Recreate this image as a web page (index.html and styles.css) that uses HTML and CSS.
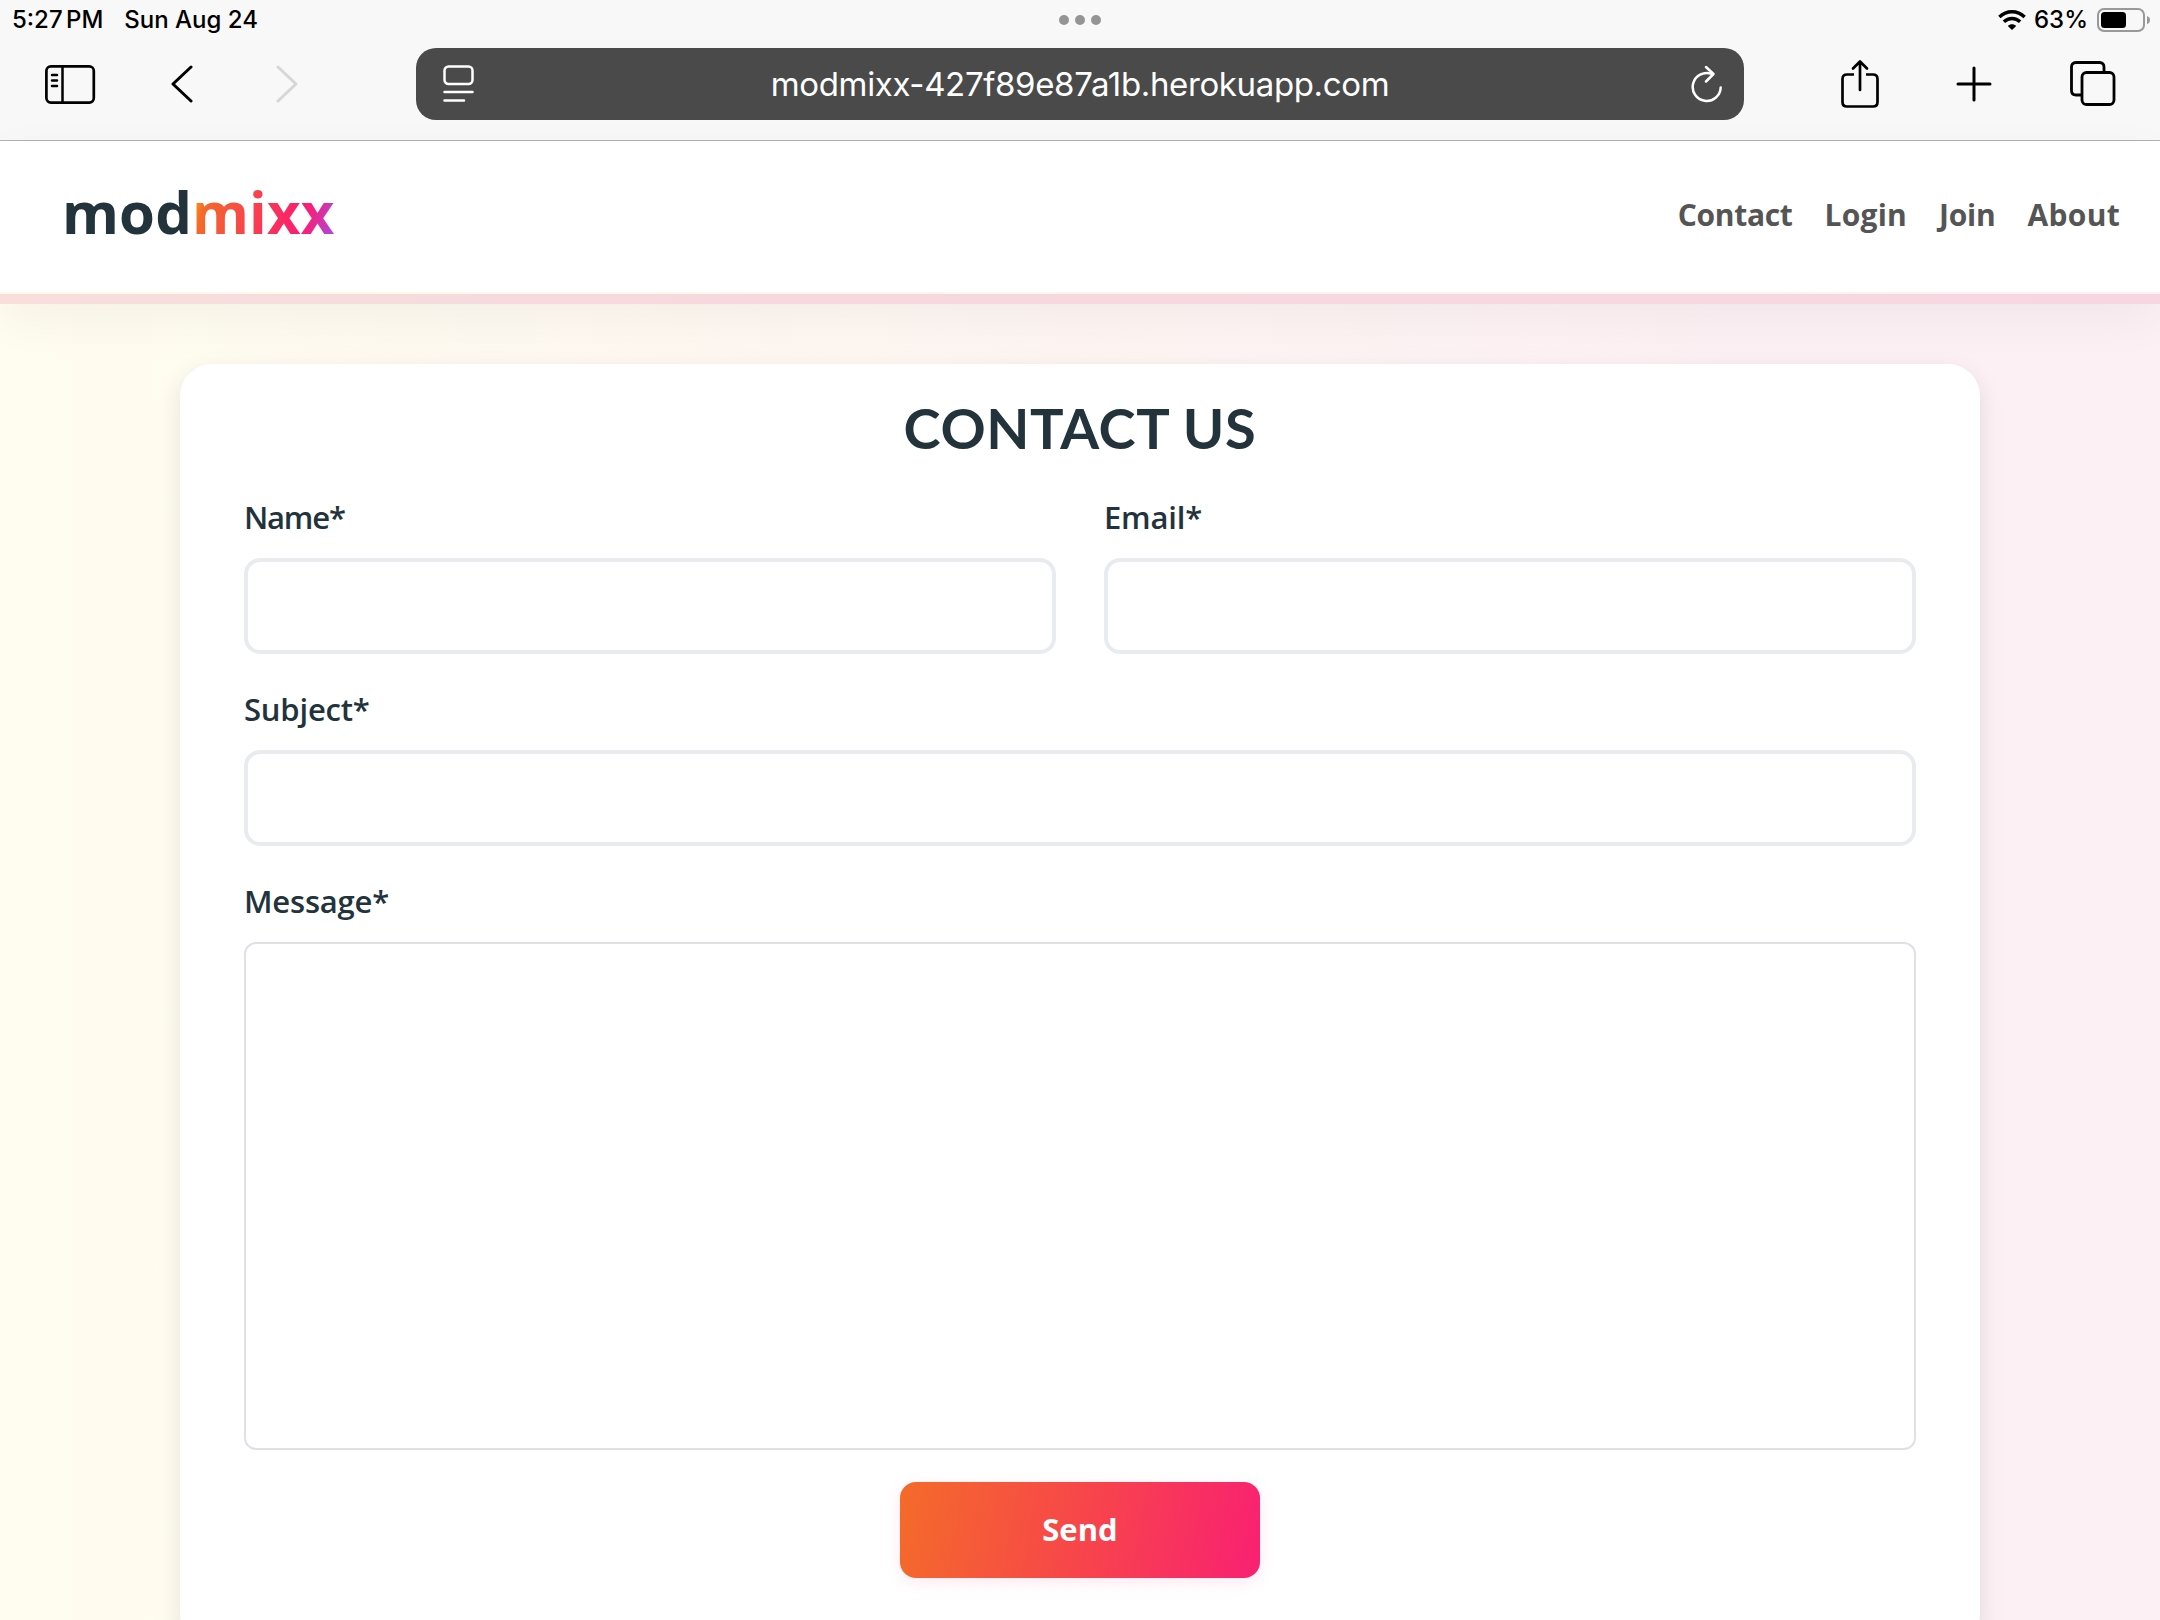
FILE: index.html
```html
<!DOCTYPE html>
<html lang="en">
<head>
<meta charset="utf-8">
<title>modmixx</title>
<link rel="stylesheet" href="styles.css">
</head>
<body>
<div class="browser">
  <div class="status">
    <div class="status-left"><span class="time">5:27 PM</span><span class="date">Sun Aug 24</span></div>
    <div class="dots"><i></i><i></i><i></i></div>
    <div class="status-right">
      <svg class="wifi" width="28" height="20" viewBox="0 0 28 20" fill="none" stroke="#000" stroke-width="3.4"><path d="M1.4 7C8.5 0 19.500 0 26.600 7M5.900 11.800C10.400 7.400 17.600 7.400 22.100 11.800"/><path d="M14 20L9.800 16C12 13.800 16 13.800 18.200 16Z" fill="#000" stroke="none"/></svg>
      <span class="percent">63%</span>
      <svg class="battery" width="54" height="24" viewBox="0 0 54 24"><rect x="1" y="1" width="46" height="22" rx="6" fill="none" stroke="#999" stroke-width="2"/><rect x="4" y="4" width="25" height="16" rx="3.500"/><path d="M50 8Q53 9 53 12T50 16Z" fill="#999"/></svg>
    </div>
  </div>
  <div class="toolbar">
    <div class="tools tools-left">
      <svg class="sidebar-icon" width="52" height="40" viewBox="0 0 52 40" fill="none" stroke="#000" stroke-width="2.700" stroke-linecap="round"><rect x="2.400" y="1.400" width="47.400" height="36.200" rx="4.500"/><path d="M18.500 1.500V37.500M8 10H13M8 15.500H13M8 21H13" stroke-width="2.500"/></svg>
      <svg width="22" height="38" viewBox="0 0 22 38" fill="none" stroke="#000" stroke-width="3" stroke-linecap="round" stroke-linejoin="round"><path d="M20 2L2 19L20 36"/></svg>
      <svg width="22" height="38" viewBox="0 0 22 38" fill="none" stroke="#d6d6d6" stroke-width="3" stroke-linecap="round" stroke-linejoin="round"><path d="M2 2L20 19L2 36"/></svg>
    </div>
    <div class="address">
      <svg width="32" height="38" viewBox="0 0 32 38" fill="none" stroke="#fff" stroke-width="2.500" stroke-linecap="round"><rect x="1.500" y="1.500" width="28" height="17.500" rx="4"/><path d="M1.500 27H29.500M1.500 35.500H21"/></svg>
      <span class="url">modmixx-427f89e87a1b.herokuapp.com</span>
      <svg width="32" height="38" viewBox="0 0 32 38" fill="none" stroke="#fff" stroke-width="2.500" stroke-linecap="round" stroke-linejoin="round"><path d="M29.700 22.500A14 14 0 1 1 20.500 8.800M15 2L22.500 9L15 16.500"/></svg>
    </div>
    <div class="tools tools-right">
      <svg width="40" height="50" viewBox="0 0 40 50" fill="none" stroke="#000" stroke-width="2.700" stroke-linecap="round" stroke-linejoin="round"><path d="M14 15.500H7Q2.500 15.500 2.500 20V43Q2.500 47.500 7 47.500H33Q37.500 47.500 37.500 43V20Q37.500 15.500 33 15.500H26" stroke-linecap="butt"/><path d="M20 31V3M13 9.500L20 2.500L27 9.500"/></svg>
      <svg class="plus-icon" width="36" height="36" viewBox="0 0 36 36" fill="none" stroke="#000" stroke-width="3" stroke-linecap="round"><path d="M18 2V34M2 18H34"/></svg>
      <svg class="tabs-icon" width="46" height="46" viewBox="0 0 46 46" fill="none" stroke="#000" stroke-width="2.800"><path d="M34 11V6Q34 1.500 29.500 1.500H6Q1.500 1.500 1.500 6V29.500Q1.500 34 6 34H12"/><rect x="12" y="11.500" width="32" height="32" rx="4.500"/></svg>
    </div>
  </div>
</div>
<header class="site-header">
  <a class="logo">mod<span>mixx</span></a>
  <nav><a class="n-contact">Contact</a><a class="n-login">Login</a><a class="n-join">Join</a><a class="n-about">About</a></nav>
</header>
<main>
  <form class="card">
    <h1>CONTACT US</h1>
    <div class="row">
      <div class="field"><label class="l-name">Name*</label><input type="text"></div>
      <div class="field"><label>Email*</label><input type="text"></div>
    </div>
    <div class="field"><label>Subject*</label><input type="text"></div>
    <div class="field"><label>Message*</label><textarea></textarea></div>
    <button type="button">Send</button>
  </form>
</main>
</body>
</html>
```
FILE: styles.css
```css
* { box-sizing: border-box; }
html, body { margin: 0; height: 1620px; overflow: hidden; }
body {
  display: flex;
  flex-direction: column;
  background: linear-gradient(90deg, #fffdef 0%, #fdf0f4 80%, #fdf0f4 100%);
  font-family: "Open Sans", sans-serif;
  color: #22333b;
}
svg { display: block; flex: none; }
.browser {
  flex: none;
  height: 141px;
  background: #f8f8f8;
  border-bottom: 1px solid #b2b2b2;
  font-family: Inter, sans-serif;
  color: #000;
}
.status {
  display: grid;
  grid-template-columns: minmax(0, 1fr) auto minmax(0, 1fr);
  align-items: center;
  height: 40px;
  padding: 0 9px;
  font-size: 24px;
  font-weight: 500;
  white-space: pre;
}
.status-left { display: flex; gap: 21px; padding: 0 0 1px 3px; }
.time { word-spacing: -3px; }
.dots { display: flex; gap: 6px; }
.dots i { width: 10px; height: 10px; border-radius: 50%; background: #949494; }
.status-right { display: flex; justify-content: flex-end; align-items: center; }
.percent { margin: 0 9px 0 8px; padding-bottom: 1px; }
.toolbar {
  display: grid;
  grid-template-columns: 416px 1328px 416px;
  align-items: center;
  height: 88px;
}
.tools { display: flex; align-items: center; }
.tools-left { padding-left: 44px; gap: 75px; }
.tools-left svg:last-child { margin-left: 8px; }
.sidebar-icon { margin-top: 2px; }
.tools-right { padding-left: 96px; gap: 79px; }
.plus-icon { margin: 0 -1px 0 -3px; }
.address {
  display: flex;
  align-items: center;
  justify-content: space-between;
  height: 72px;
  padding: 0 21px 0 27px;
  border-radius: 20px;
  background: #4a4a4a;
  color: #fff;
}
.url { margin-right: 6px; font-size: 33px; letter-spacing: -0.36px; }
.site-header {
  display: flex;
  flex: none;
  align-items: center;
  justify-content: space-between;
  height: 163px;
  padding: 0 40px 6px 62px;
  background: linear-gradient(90deg, #fffbea, #fff0f3) left bottom / 100% 2px no-repeat padding-box, #fff;
  border-style: solid;
  border-color: #f7d7e0;
  border-width: 0 0 10px;
  border-image: linear-gradient(90deg, #fadedc, #f6d8de 35%, #f7d6e1) 1;
  box-shadow: 0 16px 48px rgba(0, 0, 0, 0.045);
}
.logo { margin-top: -6px; font-size: 58px; font-weight: 700; line-height: 1; letter-spacing: 0.15px; }
.logo span {
  color: transparent;
  background: linear-gradient(105deg, #ffa500 4%, #f4692b 13%, #fa2566 67%, #f7207a 79%, #a34de8 99%);
  background-clip: text;
}
nav { display: flex; gap: 32px; font-size: 30px; font-weight: 700; color: #555; }
.n-contact { letter-spacing: -0.3px; }
.n-login { letter-spacing: 0.2px; }
.n-join { letter-spacing: -0.2px; }
.n-about { letter-spacing: 0.3px; }
main { padding: 60px 180px 0; }
.card {
  display: flex;
  flex-direction: column;
  height: 1282px;
  padding: 31px 64px 0;
  border-radius: 32px;
  background: #fff;
  box-shadow: 0 8px 24px rgba(0, 0, 0, 0.1);
}
h1 {
  margin: 0 0 33px;
  font: 700 56px/65px Lato, sans-serif;
  letter-spacing: 0.6px;
  text-align: center;
  height: 66px;
}
.row { display: grid; grid-template-columns: 1fr 1fr; gap: 48px; }
.field { display: flex; flex-direction: column; align-items: flex-start; margin-bottom: 32px; }
label { height: 64px; font-size: 31px; font-weight: 600; line-height: 46px; letter-spacing: -0.2px; }
.l-name { letter-spacing: -1.2px; }
input { width: 100%; height: 96px; border: 4px solid #e9ecef; border-radius: 16px; background: #fff; }
textarea {
  width: 100%;
  height: 508px;
  border: 2px solid #dee2e6;
  border-radius: 12px;
  background: #fff;
  resize: none;
}
button {
  align-self: center;
  width: 360px;
  height: 96px;
  padding: 0 0 2px;
  border: 0;
  border-radius: 16px;
  background: linear-gradient(100deg, #f46b2a, #f7464a 50%, #f92072);
  box-shadow: 0 4px 16px rgba(249, 32, 114, 0.1);
  color: #fff;
  font: 700 31px/94px "Open Sans", sans-serif;
}
```
